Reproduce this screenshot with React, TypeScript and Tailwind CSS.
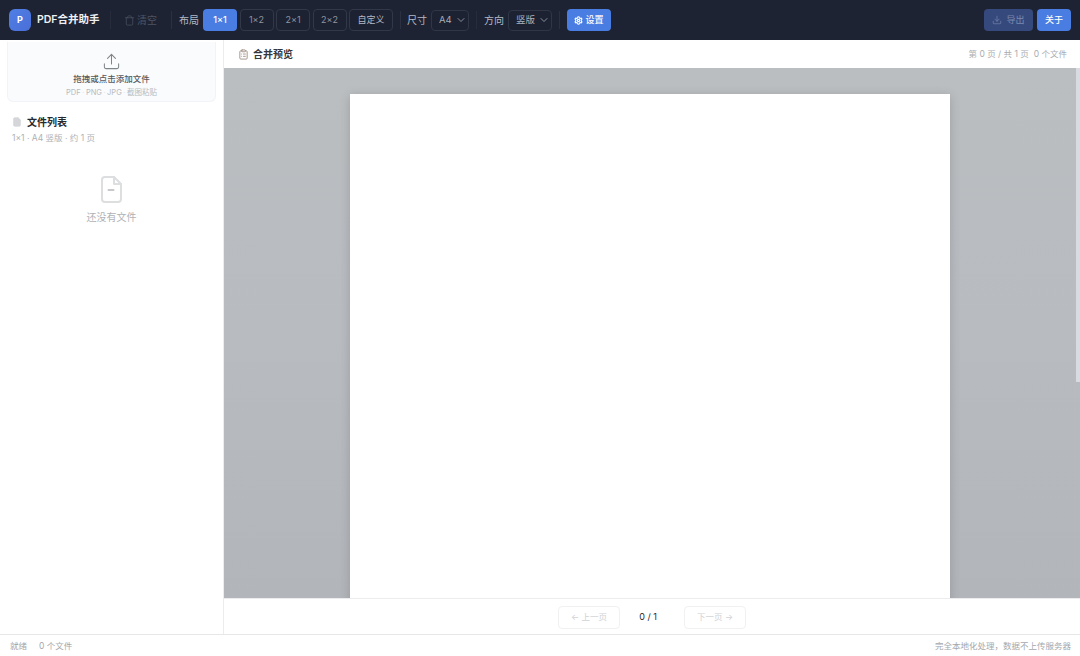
import { ChevronDown, ClipboardList, File, Settings, Trash, Upload, Download } from "lucide-react"

const font = "font-['Inter','Noto_Sans_CJK_SC',sans-serif]"

function LayoutButton({ label, active }: { label: string; active?: boolean }) {
  return (
    <button
      className={
        active
          ? "h-[22px] w-[34px] shrink-0 rounded bg-[#4a7de2] text-[9px] font-medium text-white"
          : "h-[22px] w-[34px] shrink-0 rounded border border-[#313848] bg-[#1c2231] text-[9px] text-[#8f95a1]"
      }
    >
      {label}
    </button>
  )
}

function Select({ label, width }: { label: string; width: string }) {
  return (
    <div className={`flex h-[21px] shrink-0 items-center justify-between whitespace-nowrap rounded border border-[#2f3646] bg-[#1c2231] pl-[7px] pr-[1px] text-[9.5px] text-[#a9aeb9] ${width}`}>
      <span>{label}</span>
      <ChevronDown className="h-3 w-3 shrink-0 text-[#aab0bc]" strokeWidth={1.5} />
    </div>
  )
}

function Divider() {
  return <div className="h-[18px] w-px shrink-0 bg-[#2b3141]" />
}

export default function App() {
  return (
    <div className={`flex h-[656px] w-[1080px] flex-col overflow-hidden bg-white ${font}`}>
      <header className="flex h-10 shrink-0 items-center bg-[#1d2332] px-[9px]">
        <div className="flex h-[22px] w-[22px] shrink-0 items-center justify-center rounded-md bg-gradient-to-br from-[#4f7fe4] to-[#4a6fd8] text-[9px] font-bold text-white">
          P
        </div>
        <span className="ml-[6px] w-[63px] whitespace-nowrap text-[10.5px] font-semibold text-[#eef0f4]">PDF合并助手</span>
        <div className="ml-[10px] h-[18px] w-px shrink-0 bg-[#262c3b]" />
        <div className="ml-[13px] flex items-center gap-[2px] text-[10px] text-[#4d5463]">
          <Trash className="h-[11px] w-[11px]" strokeWidth={1.5} />
          <span>清空</span>
        </div>
        <div className="ml-[14px]">
          <Divider />
        </div>
        <span className="ml-[7px] whitespace-nowrap text-[10px] text-[#b4b9c4]">布局</span>
        <div className="ml-1 flex gap-[2.5px]">
          <LayoutButton label="1×1" active />
          <LayoutButton label="1×2" />
          <LayoutButton label="2×1" />
          <LayoutButton label="2×2" />
          <button className="h-[22px] w-[44px] shrink-0 whitespace-nowrap rounded border border-[#313848] bg-[#1c2231] text-[9px] text-[#b4b9c4]">
            自定义
          </button>
        </div>
        <div className="ml-[7px]">
          <Divider />
        </div>
        <span className="ml-[6px] whitespace-nowrap text-[10px] text-[#b4b9c4]">尺寸</span>
        <div className="ml-1">
          <Select label="A4" width="w-[38px]" />
        </div>
        <div className="ml-[7px] h-[18px] w-px shrink-0 bg-[#262c3b]" />
        <span className="ml-[7px] whitespace-nowrap text-[10px] text-[#b4b9c4]">方向</span>
        <div className="ml-[4px]">
          <Select label="竖版" width="w-[44px]" />
        </div>
        <div className="ml-[7px]">
          <Divider />
        </div>
        <button className="ml-[7px] flex h-[22px] w-[44px] shrink-0 items-center justify-center gap-[2px] whitespace-nowrap rounded bg-[#4a7de2] text-[9px] font-medium text-white">
          <Settings className="h-[9px] w-[9px]" strokeWidth={3} />
          设置
        </button>
        <button className="ml-auto flex h-[22px] w-[49px] items-center justify-center gap-1 whitespace-nowrap rounded bg-[#36497d] text-[9px] text-[#7c8aae]">
          <Download className="h-[10px] w-[10px]" strokeWidth={1.5} />
          导出
        </button>
        <button className="ml-[4px] h-[22px] w-[34px] whitespace-nowrap rounded bg-[#4a7de2] text-[9px] font-medium text-white">
          关于
        </button>
      </header>

      <div className="flex min-h-0 flex-1">
        <aside className="flex w-[224px] shrink-0 flex-col border-r border-[#ececee] bg-white">
          <div className="mx-[7px] mt-[2px] flex h-[60px] flex-col items-center rounded-b-md border border-t-0 border-[#f1f3f7] bg-[#fafbfd] pt-[10px]">
            <Upload className="h-[19px] w-[19px] text-[#7f8488]" strokeWidth={1.3} />
            <span className="mt-[2px] text-[8.5px] font-medium leading-[12px] text-[#55595e]">拖拽或点击添加文件</span>
            <div className="mt-[2px] flex items-center gap-[1.5px] text-[7.5px] leading-[12px] text-[#b8bbbf]">
              <span>PDF</span>
              <span className="text-[#e2e3e5]">·</span>
              <span>PNG</span>
              <span className="text-[#e2e3e5]">·</span>
              <span>JPG</span>
              <span className="text-[#e2e3e5]">·</span>
              <span>截图粘贴</span>
            </div>
          </div>
          <div className="ml-[12px] mt-[13px] flex items-center gap-[5px]">
            <File className="h-[10px] w-[10px] fill-[#d4d6d9] text-[#d4d6d9]" />
            <span className="text-[10px] font-semibold leading-[14px] text-[#25282d]">文件列表</span>
          </div>
          <div className="ml-[12px] mt-[3px] text-[8.5px] leading-[12px] text-[#aeb1b5]">1×1 · A4 竖版 · 约 1 页</div>
          <div className="mt-[32px] flex flex-col items-center">
            <svg width="21" height="27" viewBox="0 0 21 27" fill="none" stroke="#dcdee0" strokeWidth="2" strokeLinejoin="round" strokeLinecap="round">
              <path d="M4 1h9l7 7v15a3 3 0 0 1-3 3H4a3 3 0 0 1-3-3V4a3 3 0 0 1 3-3z" />
              <path d="M13 1v7h7" />
              <path d="M7.5 14h5" stroke="#c6c8cb" />
            </svg>
            <span className="mt-[7px] text-[10px] leading-[14px] text-[#b0b2b6]">还没有文件</span>
          </div>
        </aside>

        <main className="flex min-w-0 flex-1 flex-col">
          <div className="flex h-7 shrink-0 items-center justify-between bg-white pl-[14px] pr-[13px]">
            <div className="flex items-center gap-[4px]">
              <ClipboardList className="h-[11px] w-[11px] text-[#a08f85]" strokeWidth={2} />
              <span className="text-[10px] font-semibold text-[#34373c]">合并预览</span>
            </div>
            <div className="flex gap-[5px] text-[8.5px] text-[#a9acb0]">
              <span>第 0 页 / 共 1 页</span>
              <span>0 个文件</span>
            </div>
          </div>
          <div className="relative min-h-0 flex-1 overflow-hidden bg-gradient-to-b from-[#babec0] via-[#b8bbc0] to-[#b2b5b9] pl-[126px] pt-[26px]">
            <div className="h-[800px] w-[600px] bg-white shadow-[0_2px_10px_rgba(0,0,0,0.16)]" />
            <div className="absolute right-0 top-0 h-[314px] w-[4px] bg-[#d8dbe2]" />
          </div>
          <div className="flex h-9 shrink-0 items-center justify-center border-t border-[#ececee] bg-white">
            <button className="mt-[1px] h-[23px] w-[62px] rounded border border-[#f1f1f2] text-[8.5px] text-[#d0d2d4]">← 上一页</button>
            <span className="mt-[1px] w-[64px] pr-[8px] text-center text-[9px] text-[#26282c]">0 / 1</span>
            <button className="mt-[1px] h-[23px] w-[62px] rounded border border-[#f1f1f2] text-[8.5px] text-[#d0d2d4]">下一页 →</button>
          </div>
        </main>
      </div>

      <footer className="flex h-[22px] shrink-0 items-center justify-between border-t border-[#e6e7e9] bg-white pl-[10px] pr-[9px] pt-[1px] text-[8.5px] text-[#a5a8ac]">
        <div className="flex items-center gap-[12px]">
          <span>就绪</span>
          <span>0 个文件</span>
        </div>
        <span>完全本地化处理，数据不上传服务器</span>
      </footer>
    </div>
  )
}
